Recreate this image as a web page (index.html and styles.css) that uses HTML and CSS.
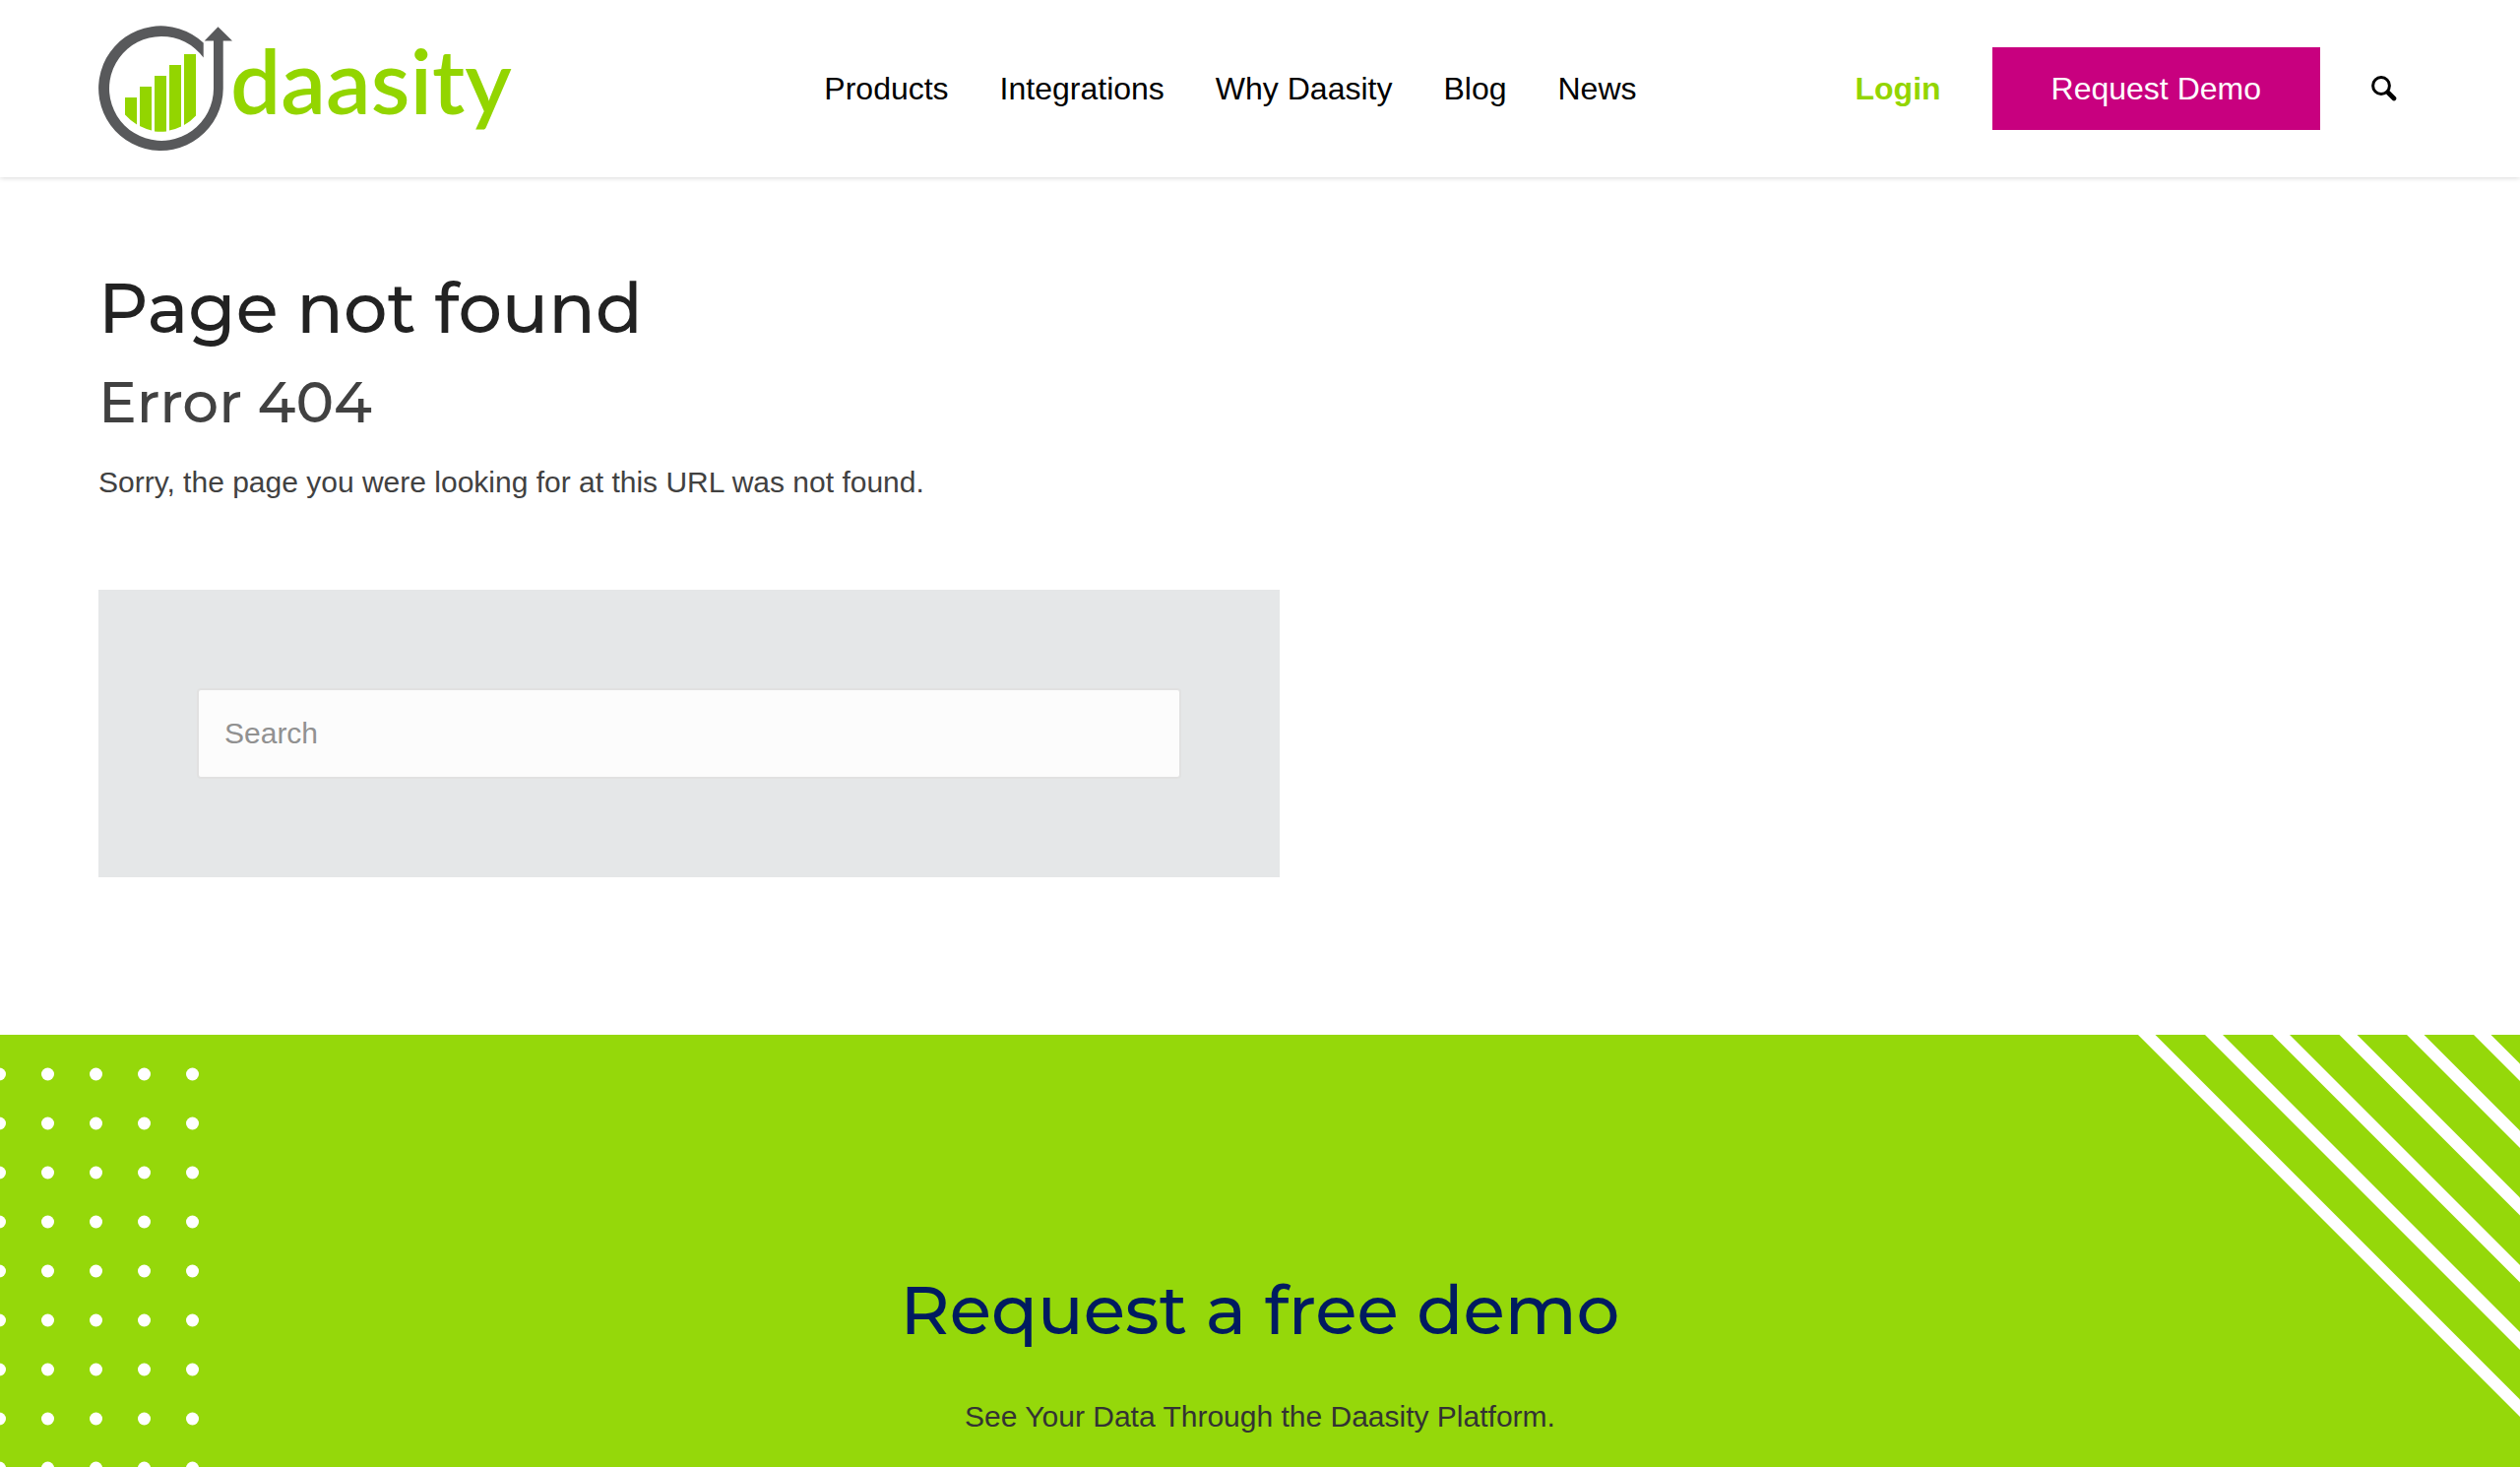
FILE: index.html
```html
<!DOCTYPE html>
<html lang="en">

<head>
    <meta charset="UTF-8">
    <meta name="viewport" content="width=device-width, initial-scale=1.0">
    <title>Page not found - Daasity</title>
    <link rel="stylesheet" href="styles.css">
</head>

<body>
    <header class="header">
        <a class="logo" href="#" aria-label="Daasity">
            <svg width="420" height="130" viewBox="0 0 420 130">
                <!-- ring and arrow -->
                <path fill="#58595b" d="M106.7 18.5A63.3 63.3 0 1 0 126.7 65V16.5H136L121.5 2.3L107.7 16.5H117V65A53 53 0 1 1 106.7 33.5Z" />
                <!-- bars -->
                <path fill="#93d500" d="M27 74H39V101.500Q32 97 27 91.500ZM42 63H54V107.500Q48 106 42 103ZM57 52H69V108.500Q63 109 57 108.500ZM72 41H84V103.500Q78 106.500 72 107.500ZM87 30H99V92.500Q93 99 87 102Z" />
                <text class="logo_text" x="134" y="91">daasity</text>
            </svg>
        </a>
        <nav class="nav">
            <a href="#">Products</a>
            <a href="#">Integrations</a>
            <a href="#">Why Daasity</a>
            <a href="#">Blog</a>
            <a href="#">News</a>
        </nav>
        <div class="actions">
            <a class="login" href="#">Login</a>
            <a class="demo_btn" href="#">Request Demo</a>
            <button class="search_btn" type="button" aria-label="Search">
                <svg width="26" height="26" viewBox="0 0 26 26" fill="none" stroke="#000">
                    <circle cx="10" cy="10" r="8.400" stroke-width="3" />
                    <path d="M17 17L23 23" stroke-width="4.600" stroke-linecap="round" />
                </svg>
            </button>
        </div>
    </header>

    <main class="main">
        <h1>Page not found</h1>
        <h2>Error 404</h2>
        <p>Sorry, the page you were looking for at this URL was not found.</p>
        <form class="search_box">
            <input type="text" placeholder="Search" aria-label="Search">
        </form>
    </main>

    <section class="cta">
        <svg class="dots" width="220" height="100%">
            <defs>
                <pattern id="dot" width="49" height="50" x="-25" y="15" patternUnits="userSpaceOnUse">
                    <circle cx="24.500" cy="25" r="6.500" fill="#fff" />
                </pattern>
            </defs>
            <rect width="220" height="100%" fill="url(#dot)" />
        </svg>
        <svg class="stripes" width="388" height="388" viewBox="0 0 388 388" fill="#fff">
            <path d="M0 0H17.500L388 370.500V388Z" />
            <path d="M68 0H86L388 302V320Z" />
            <path d="M136.500 0H154L388 234V251.500Z" />
            <path d="M204.500 0H222.500L388 165.500V183.500Z" />
            <path d="M273 0H290.500L388 97.500V115Z" />
            <path d="M341 0H358.500L388 29.500V47Z" />
        </svg>
        <h2>Request a free demo</h2>
        <p>See Your Data Through the Daasity Platform.</p>
    </section>
</body>

</html>
```
FILE: styles.css
```css
* {
    box-sizing: border-box;
}

body {
    display: flex;
    flex-direction: column;
    min-height: 100vh;
    margin: 0;
    font-family: "Liberation Sans", Arial, sans-serif;
    font-size: 30px;
    line-height: 50px;
    color: #414141;
    background-color: #fff;
}

a {
    text-decoration: none;
}

h1,
h2 {
    margin: 0;
    font-family: Montserrat, Inter, sans-serif;
    font-weight: 500;
}

p {
    margin: 0;
}

.header {
    display: flex;
    align-items: center;
    height: 180px;
    padding: 0 125px 0 100px;
    font-size: 32px;
    box-shadow: 0 0 6px rgba(0, 0, 0, 0.2);
}

.logo svg {
    display: block;
}

.logo_text {
    font-family: Lato, sans-serif;
    font-size: 91px;
    font-weight: 600;
    fill: #93d500;
}

.nav {
    display: flex;
    gap: 52px;
    margin-left: auto;
}

.nav a {
    color: #000;
}

.actions {
    display: flex;
    align-items: center;
    gap: 52px;
    margin-left: 222px;
}

.login {
    font-weight: 700;
    color: #93d500;
}

.demo_btn {
    padding: 17px 60px;
    color: #fff;
    background-color: #c8007f;
}

.search_btn {
    padding: 0;
    border: 0;
    background: none;
}

.search_btn svg {
    display: block;
}

.main {
    padding: 97px 100px 160px;
}

.main h1 {
    font-size: 70px;
    line-height: 72px;
    color: #222;
}

.main h2 {
    margin-top: 24px;
    font-size: 58px;
    line-height: 72px;
}

.main p {
    margin-top: 20px;
}

.search_box {
    max-width: 1200px;
    margin-top: 84px;
    padding: 100px;
    background-color: #e5e7e8;
}

.search_box input {
    display: block;
    width: 100%;
    height: 92px;
    padding: 0 26px;
    font: inherit;
    border: 2px solid #e1e1e1;
    border-radius: 4px;
    background-color: #fcfcfc;
}

.search_box input::placeholder {
    color: #919191;
}

.cta {
    position: relative;
    flex: 1;
    padding-top: 239px;
    text-align: center;
    color: #333;
    background-color: #95d80a;
    overflow: hidden;
}

/* decoration on both sides */
.dots {
    position: absolute;
    top: 0;
    left: 0;
}

.stripes {
    position: absolute;
    top: 0;
    right: 0;
}

.cta h2 {
    font-size: 69px;
    line-height: 80px;
    color: #001b60;
}

.cta p {
    margin-top: 44px;
}
```
